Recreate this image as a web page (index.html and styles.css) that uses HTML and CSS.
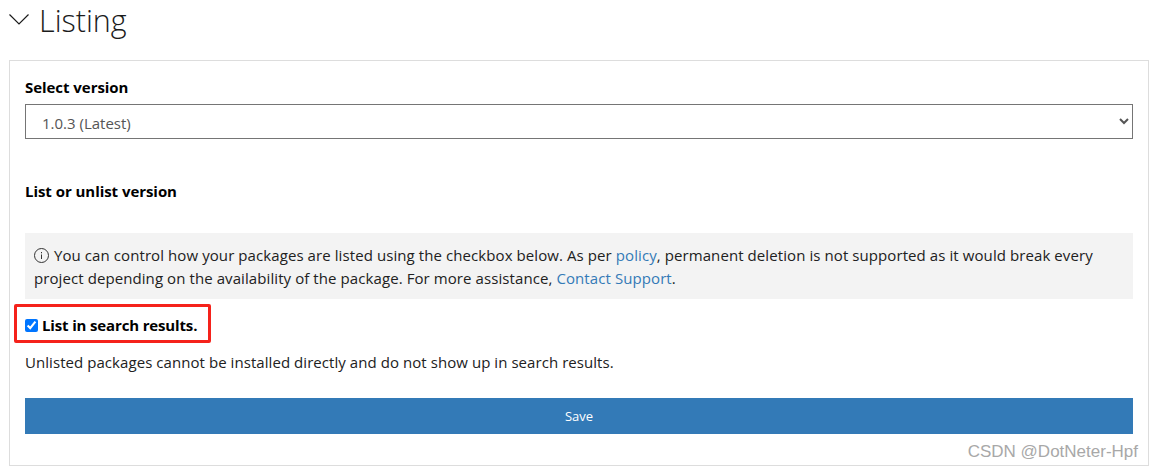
FILE: index.html
```html
<!DOCTYPE html>
<html lang="en">
<head>
    <meta charset="UTF-8">
    <title>Listing</title>
    <link rel="stylesheet" href="styles.css">
</head>
<body>
    <h2 class="section-title">
        <svg class="chevron" width="20" height="11" viewBox="0 0 20 11"><path d="M.5 .5l9.5 9.5 9.5-9.5" fill="none" stroke="#1b1b1b" stroke-width="1.2"/></svg>
        <span>Listing</span>
    </h2>
    <form class="panel">
        <label class="field-label" for="version">Select version</label>
        <select class="version-select" id="version">
            <option>1.0.3 (Latest)</option>
        </select>
        <div class="field-label list-label">List or unlist version</div>
        <div class="notice">
            <svg class="info-icon" width="15" height="15" viewBox="0 0 15 15"><circle cx="7.5" cy="7.5" r="7" fill="none" stroke="#333" stroke-width="1"/><path d="M7.5 6.5v4.5M7.5 4v1.3" stroke="#333" stroke-width="1"/></svg>
            You can control how your packages are listed using the checkbox below. As per <a href="#">policy</a>, permanent deletion is not supported as it would break every project depending on the availability of the package. For more assistance, <a href="#">Contact Support</a>.
        </div>
        <label class="check-row">
            <input type="checkbox" checked>
            <span>List in search results.</span>
        </label>
        <p class="hint">Unlisted packages cannot be installed directly and do not show up in search results.</p>
        <button class="save-btn" type="button">Save</button>
    </form>
    <div class="highlight"></div>
    <div class="watermark">CSDN @DotNeter-Hpf</div>
</body>
</html>
```

FILE: styles.css
```css
body {
    margin: 0;
    height: 470px;
    overflow: hidden;
    position: relative;
    background: #fff;
    color: #000;
    font-family: "Open Sans", "Noto Sans", sans-serif;
    font-size: 15px;
}
.section-title {
    margin: 0;
    height: 60px;
    padding-left: 9px;
    display: flex;
    align-items: flex-start;
    gap: 10px;
    font-size: 30.5px;
    font-weight: 300;
    color: #1b1b1b;
    line-height: 40px;
}
.chevron {
    margin-top: 14px;
}
.panel {
    margin-left: 9px;
    width: 1108px;
    height: 374px;
    padding: 15px;
    border: 1px solid #ddd;
    display: flex;
    flex-direction: column;
}
.field-label {
    font-weight: 700;
    line-height: 24px;
    margin-top: -1px;
    margin-bottom: 5px;
    letter-spacing: -0.05px;
}
.version-select {
    width: 100%;
    height: 35px;
    padding: 2px 0 0 12px;
    border: 1px solid #757575;
    border-radius: 0;
    background: #fff;
    color: #555;
    font: inherit;
}
.list-label {
    margin-top: 40px;
    margin-bottom: 0;
}
.notice {
    margin-top: 30px;
    padding: 11px 9px 9px;
    background: #f3f3f3;
    line-height: 23px;
    color: #212121;
    letter-spacing: 0.085px;
}
.notice a {
    color: #337ab7;
    text-decoration: none;
}
.info-icon {
    vertical-align: -2px;
    margin-right: 1px;
}
.check-row {
    margin-top: 15px;
    display: flex;
    align-items: center;
    gap: 4px;
    font-weight: 700;
    line-height: 22px;
    letter-spacing: -0.15px;
}
.check-row input {
    margin: 0;
    width: 13px;
    height: 13px;
    accent-color: #0075ff;
}
.hint {
    margin: 16px 0 0;
    line-height: 20px;
    color: #212121;
    letter-spacing: 0.06px;
}
.save-btn {
    margin-top: 26px;
    height: 36px;
    border: 0;
    background: #337ab7;
    color: #fff;
    font: inherit;
    font-size: 13px;
}
.highlight {
    position: absolute;
    left: 14px;
    top: 304px;
    width: 191px;
    height: 33px;
    border: 3px solid #f5221b;
    border-radius: 2px;
}
.watermark {
    position: absolute;
    right: 15px;
    top: 442px;
    font-family: "Liberation Sans", sans-serif;
    font-size: 17px;
    color: #a8a8a8;
}
```
